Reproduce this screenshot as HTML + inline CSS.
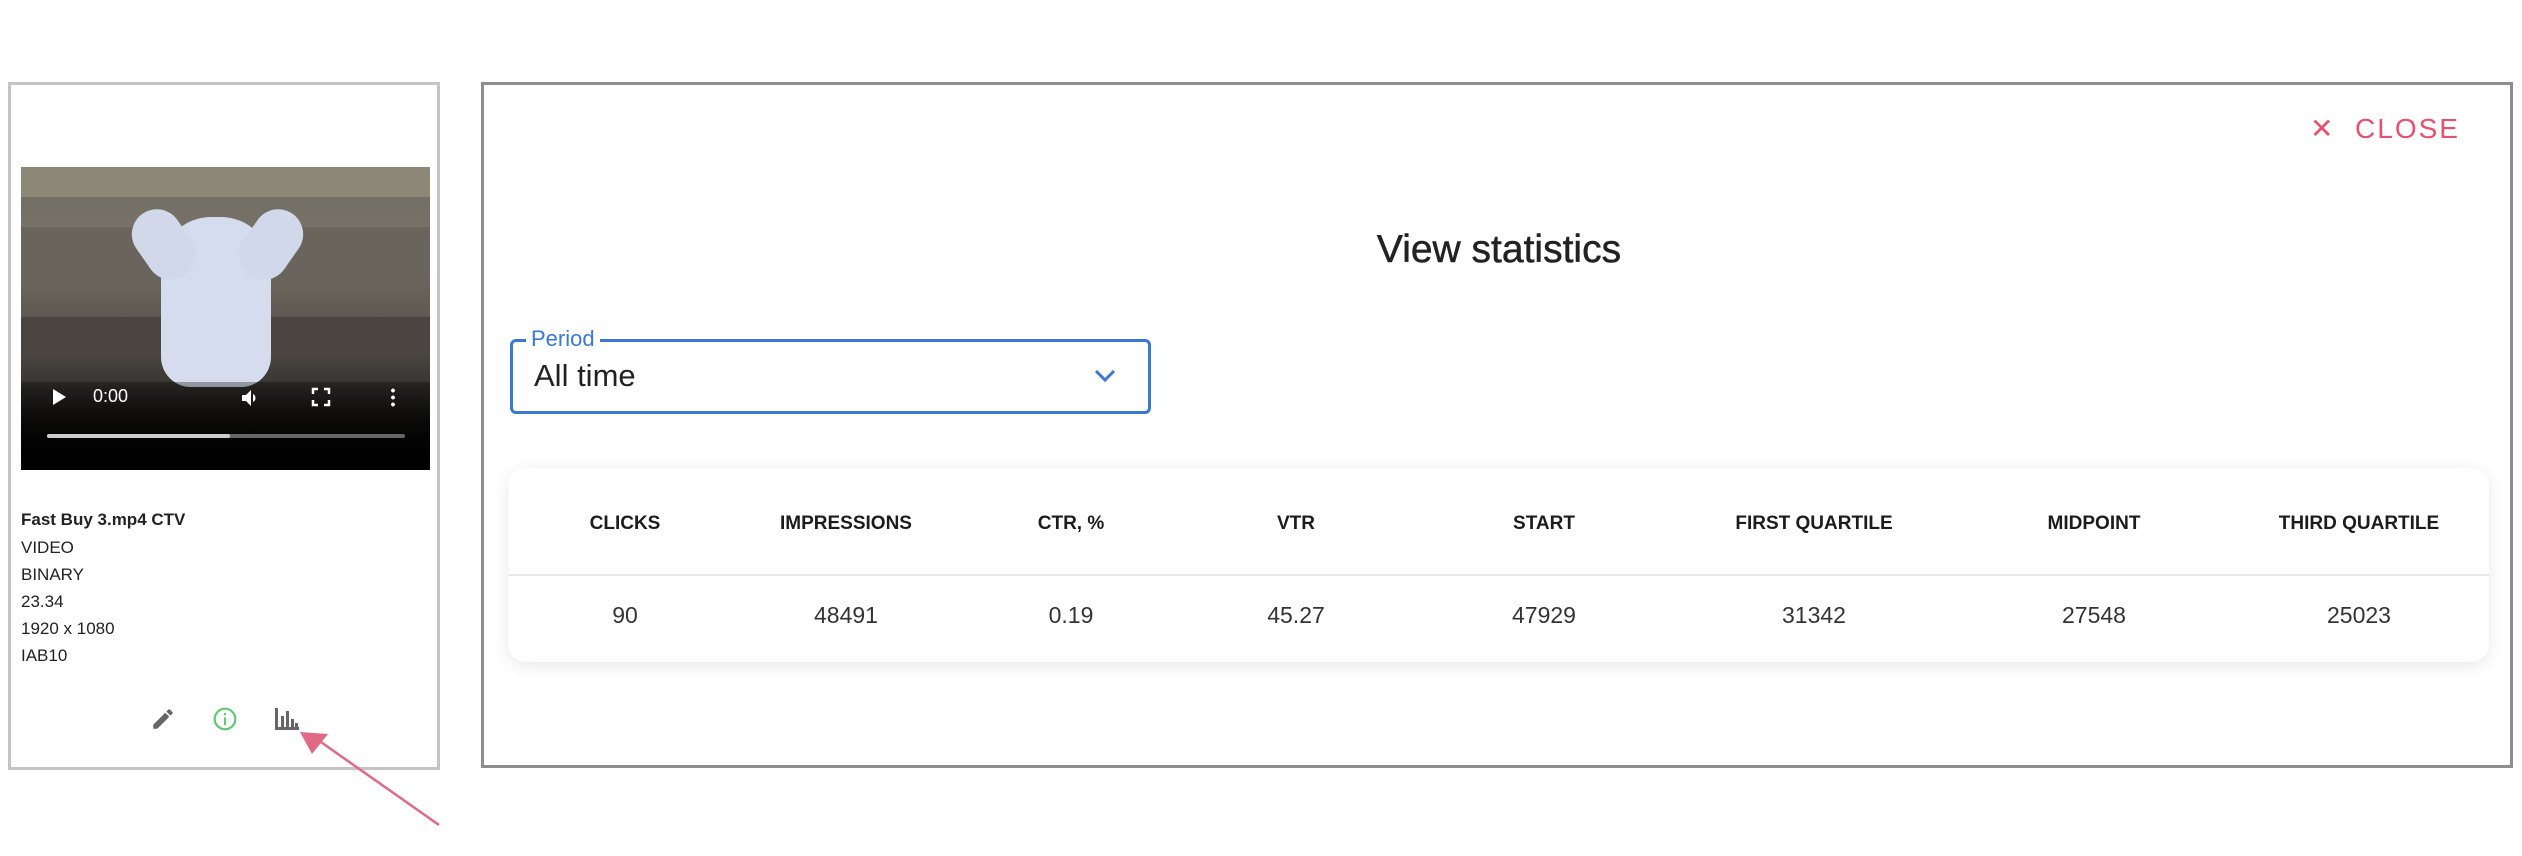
<!DOCTYPE html>
<html><head><meta charset="utf-8"><style>
*{box-sizing:border-box;margin:0;padding:0}
body{width:2522px;height:856px;background:#fff;position:relative;overflow:hidden;font-family:"Liberation Sans",sans-serif;color:#222}
.abs{position:absolute}
.card{left:8px;top:82px;width:432px;height:688px;border:3px solid #c4c4c4}
.video{left:21px;top:167px;width:409px;height:303px;background:linear-gradient(180deg,#6e6a62 0%,#7a7468 25%,#5d5850 50%,#3c3833 70%,#1a1816 85%,#000 100%);overflow:hidden}
.info{left:21px;font-size:17px;line-height:27px;color:#222}
.modal{left:481px;top:82px;width:2032px;height:686px;border:3px solid #8e8e8e}
.tbl{left:508px;top:468px;width:1981px;height:194px;border-radius:18px;background:#fff;box-shadow:0 4px 18px rgba(0,0,0,.09)}
.h{position:absolute;top:513px;font-size:19px;font-weight:bold;color:#1c1c1c;transform:translateX(-50%);white-space:nowrap}
.v{position:absolute;top:602px;font-size:23px;color:#333;transform:translateX(-50%)}
</style></head><body>
<div class="abs card"></div>
<div class="abs video">
 <div class="abs" style="left:0;top:0;width:409px;height:30px;background:#8d8778"></div>
 <div class="abs" style="left:0;top:60px;width:409px;height:60px;background:#6a655c"></div>
 <div class="abs" style="left:0;top:150px;width:409px;height:40px;background:#4a4540"></div>
 <div class="abs" style="left:140px;top:50px;width:110px;height:170px;border-radius:50px 50px 30px 30px;background:#d5dced"></div>
 <div class="abs" style="left:118px;top:40px;width:50px;height:75px;border-radius:25px;background:#d0d8ea;transform:rotate(-35deg)"></div>
 <div class="abs" style="left:225px;top:40px;width:50px;height:75px;border-radius:25px;background:#d0d8ea;transform:rotate(35deg)"></div>
 <div class="abs" style="left:0;top:215px;width:409px;height:88px;background:linear-gradient(180deg,rgba(0,0,0,.3),#000)"></div>
 <div class="abs" style="left:32px;top:222px;width:0;height:0;border-left:13px solid #fff;border-top:8px solid transparent;border-bottom:8px solid transparent"></div>
 <div class="abs" style="left:72px;top:219px;color:#fff;font-size:18px">0:00</div>
 <svg class="abs" style="left:218px;top:219px" width="24" height="24" viewBox="0 0 24 24"><path fill="#fff" d="M3 9v6h4l5 5V4L7 9H3zm13.5 3A4.5 4.5 0 0014 7.97v8.05c1.48-.73 2.5-2.25 2.5-4.02z"/></svg>
 <svg class="abs" style="left:290px;top:220px" width="20" height="20" viewBox="0 0 20 20"><path d="M2 7V2h5M13 2h5v5M18 13v5h-5M7 18H2v-5" fill="none" stroke="#fff" stroke-width="2.5"/></svg>
 <div class="abs" style="left:370px;top:220px;width:4px;height:20px;background:radial-gradient(circle,#fff 1.8px,transparent 2px) 0 0/4px 7px"></div>
 <div class="abs" style="left:26px;top:267px;width:358px;height:4px;background:#666;border-radius:2px"></div>
 <div class="abs" style="left:26px;top:267px;width:183px;height:4px;background:#ccc;border-radius:2px"></div>
</div>
<div class="abs info" style="top:506px;font-weight:bold">Fast Buy 3.mp4 CTV</div>
<div class="abs info" style="top:534px">VIDEO<br>BINARY<br>23.34<br>1920 x 1080<br>IAB10</div>
<svg class="abs" style="left:150px;top:706px" width="26" height="26" viewBox="0 0 24 24"><path fill="#666" d="M3 17.25V21h3.75L17.81 9.94l-3.75-3.75L3 17.25zM20.71 7.04a1 1 0 000-1.41l-2.34-2.34a1 1 0 00-1.41 0l-1.83 1.83 3.75 3.75 1.83-1.83z"/></svg>
<svg class="abs" style="left:212px;top:706px" width="26" height="26" viewBox="0 0 24 24"><circle cx="12" cy="12" r="9.5" fill="none" stroke="#5fc870" stroke-width="2"/><rect x="11" y="10.5" width="2" height="7" fill="#5fc870"/><rect x="11" y="6.5" width="2" height="2" fill="#5fc870"/></svg>
<svg class="abs" style="left:275px;top:708px" width="24" height="22" viewBox="0 0 24 22"><path fill="#666" d="M0 0h3v22H0zM3 19h21v3H3zM6 8h3v12H6zM11 3h3v17h-3zM16 11h3v9h-3zM20 15h3v5h-3z"/></svg>
<svg class="abs" style="left:290px;top:720px" width="160" height="115"><line x1="28" y1="20" x2="149" y2="105" stroke="#e06a85" stroke-width="2.5"/><polygon points="10,12 38,14 22,34" fill="#e06a85"/></svg>

<div class="abs modal"></div>
<div class="abs" style="left:2310px;top:112px;color:#e8506e;font-size:28px;letter-spacing:2px">&#x2715;&nbsp; CLOSE</div>
<div class="abs" style="left:0;width:2998px;top:228px;text-align:center;font-size:39px;color:#222;-webkit-text-stroke:0.5px #222">View statistics</div>
<div class="abs" style="left:510px;top:339px;width:641px;height:75px;border:3px solid #3a78d4;border-radius:6px"></div>
<div class="abs" style="left:526px;top:326px;background:#fff;padding:0 5px;color:#3a78d4;font-size:22px">Period</div>
<div class="abs" style="left:534px;top:358px;font-size:31px;color:#222">All time</div>
<svg class="abs" style="left:1094px;top:368px" width="22" height="16"><path d="M2 3l9 9 9-9" fill="none" stroke="#3a78d4" stroke-width="3"/></svg>

<div class="abs tbl"></div>
<div class="abs" style="left:508px;top:574px;width:1981px;height:2px;background:#e8e8e8"></div>
<div class="h" style="left:625px">CLICKS</div><div class="h" style="left:846px">IMPRESSIONS</div><div class="h" style="left:1071px">CTR, %</div><div class="h" style="left:1296px">VTR</div><div class="h" style="left:1544px">START</div><div class="h" style="left:1814px">FIRST QUARTILE</div><div class="h" style="left:2094px">MIDPOINT</div><div class="h" style="left:2359px">THIRD QUARTILE</div>
<div class="v" style="left:625px">90</div><div class="v" style="left:846px">48491</div><div class="v" style="left:1071px">0.19</div><div class="v" style="left:1296px">45.27</div><div class="v" style="left:1544px">47929</div><div class="v" style="left:1814px">31342</div><div class="v" style="left:2094px">27548</div><div class="v" style="left:2359px">25023</div>
</body></html>
